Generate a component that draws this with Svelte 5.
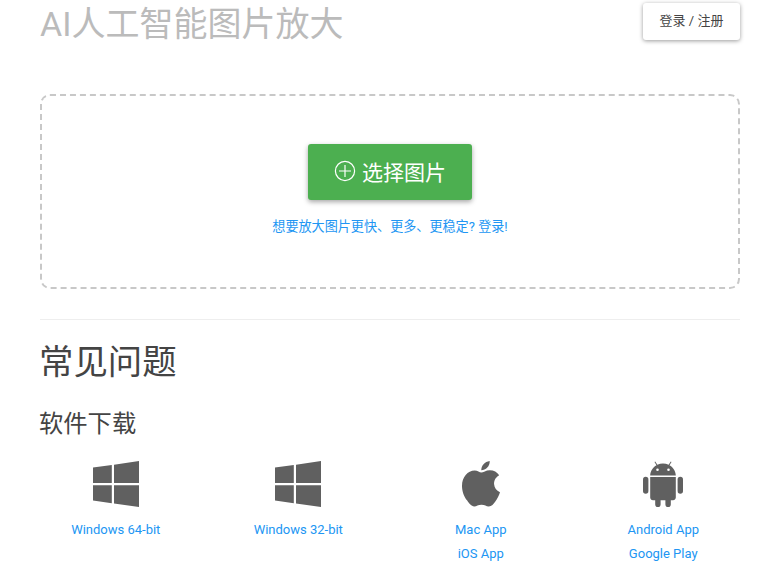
<script>
  const downloads = [
    { icon: 'windows', links: ['Windows 64-bit'] },
    { icon: 'windows', links: ['Windows 32-bit'] },
    { icon: 'apple', links: ['Mac App', 'iOS App'] },
    { icon: 'android', links: ['Android App', 'Google Play'] }
  ];
</script>

<div class="page">
  <header class="top">
    <h1>AI人工智能图片放大</h1>
    <button class="login">登录 / 注册</button>
  </header>

  <section class="drop">
    <button class="pick">
      <svg width="22" height="22" viewBox="0 0 22 22" fill="none" stroke="#fff" stroke-width="1.2">
        <circle cx="11" cy="11" r="9.6" />
        <path d="M11 5v12M5 11h12" />
      </svg>
      <span>选择图片</span>
    </button>
    <a class="hint" href="#login">想要放大图片更快、更多、更稳定? 登录!</a>
  </section>

  <hr />

  <h2>常见问题</h2>
  <h3>软件下载</h3>

  <div class="apps">
    {#each downloads as item}
      <div class="app">
        {#if item.icon === 'windows'}
          <svg class="icon" width="46" height="46" viewBox="0 0 46 46" fill="#606060">
            <path d="M0 6.6 18.8 4v18H0zM21 3.700 46 0v22H21zM0 24.200h18.800v18L0 39.600zM21 24.200h25V46l-25-3.500z" />
          </svg>
        {:else if item.icon === 'apple'}
          <svg class="icon" width="38" height="46" viewBox="0 0 38 46" fill="#606060">
            <path d="M19.200 11.600c2 0 4.800-2.300 8.600-2.300 4 0 7.400 1.900 9.400 5-4.500 2.700-5.300 6.400-5.100 9 .3 3.600 2.300 6.400 5.900 8-1.100 3.300-2.600 6.300-4.500 8.900-2 2.800-3.900 5.200-6.700 5.200-2.800 0-3.800-1.700-7.300-1.700-3.600 0-4.700 1.700-7.300 1.700-2.900 0-4.900-2.700-7-5.800C2.100 36 0 30.300 0 25c0-8.800 5.700-15.500 12.700-15.500 2.900 0 5 2.100 6.500 2.100z" />
            <path d="M19.300 9.300C19 4.800 22.800.7 27.700 0c.4 5-4.100 9.300-8.400 9.300z" />
          </svg>
        {:else}
          <svg class="icon" width="40" height="46" viewBox="0 0 40 46" fill="#606060">
            <path d="M7.200 16h25.600v20.500c0 1.600-1.300 2.800-2.800 2.800h-2.200v4.200a2.700 2.700 0 0 1-5.400 0v-4.200h-4.800v4.200a2.700 2.700 0 0 1-5.400 0v-4.200H10c-1.600 0-2.800-1.200-2.800-2.800z" />
            <rect x="0" y="15.800" width="5.400" height="17" rx="2.700" />
            <rect x="34.600" y="15.800" width="5.400" height="17" rx="2.700" />
            <path d="M7.200 14.500C7.400 10 9.900 6.300 13.500 4.300L11.500 1l.7-.5 2.200 3.300C16.100 3 18 2.600 20 2.600s3.900.4 5.600 1.200L27.800.5l.7.5-2 3.300c3.600 2 6.100 5.700 6.300 10.200zM14.500 7.400a1.300 1.300 0 1 0 0 2.600 1.300 1.300 0 0 0 0-2.600zm11 0a1.300 1.300 0 1 0 0 2.600 1.300 1.300 0 0 0 0-2.600z" fill-rule="evenodd" />
          </svg>
        {/if}
        {#each item.links as link}
          <a href="#download">{link}</a>
        {/each}
      </div>
    {/each}
  </div>
</div>

<style>
  :global(body) {
    margin: 0;
    background: #fff;
    overflow: hidden;
  }

  .page {
    width: 700px;
    margin-left: 40px;
    font-family: Roboto, "Noto Sans CJK SC", sans-serif;
    color: #444;
  }

  .top {
    display: flex;
    justify-content: space-between;
    align-items: flex-start;
    height: 94px;
  }

  h1 {
    margin: 3px 0 0;
    font-size: 34px;
    line-height: 42px;
    font-weight: 400;
    color: #bbb;
  }

  .login {
    width: 97px;
    height: 37px;
    margin-top: 3px;
    padding: 0 0 5px;
    border: 0;
    border-radius: 3px;
    background: #fff;
    font: inherit;
    font-size: 13px;
    color: #444;
    box-shadow: 0 1px 4px rgba(0, 0, 0, 0.4);
  }

  .drop {
    box-sizing: border-box;
    height: 195px;
    border: 2px dashed #c8c8c8;
    border-radius: 10px;
    display: flex;
    flex-direction: column;
    align-items: center;
    padding-top: 48px;
  }

  .pick {
    display: flex;
    align-items: center;
    justify-content: center;
    gap: 6px;
    width: 164px;
    height: 56px;
    padding: 0 0 2px 0;
    border: 0;
    border-radius: 3px;
    background: #4caf50;
    color: #fff;
    font: inherit;
    font-size: 21px;
    box-shadow: 0 2px 5px rgba(0, 0, 0, 0.35);
  }

  .hint {
    margin-top: 17px;
    font-size: 13.1px;
    line-height: 20px;
    color: #2196f3;
    text-decoration: none;
  }

  hr {
    margin: 30px 0 0;
    border: 0;
    border-top: 1px solid #eee;
  }

  h2 {
    margin: 18px 0 0 -1px;
    font-size: 34.4px;
    line-height: 48px;
    font-weight: 400;
  }

  h3 {
    margin: 21px 0 0 -1px;
    font-size: 24.3px;
    line-height: 34px;
    font-weight: 400;
  }

  .apps {
    display: grid;
    grid-template-columns: repeat(4, 1fr);
    margin: 20px -14.500px 0 -15.500px;
  }

  .app {
    display: flex;
    flex-direction: column;
    align-items: center;
  }

  .icon {
    margin-bottom: 11px;
  }

  .app a {
    font-size: 13px;
    line-height: 24px;
    color: #2196f3;
    text-decoration: none;
  }
</style>
